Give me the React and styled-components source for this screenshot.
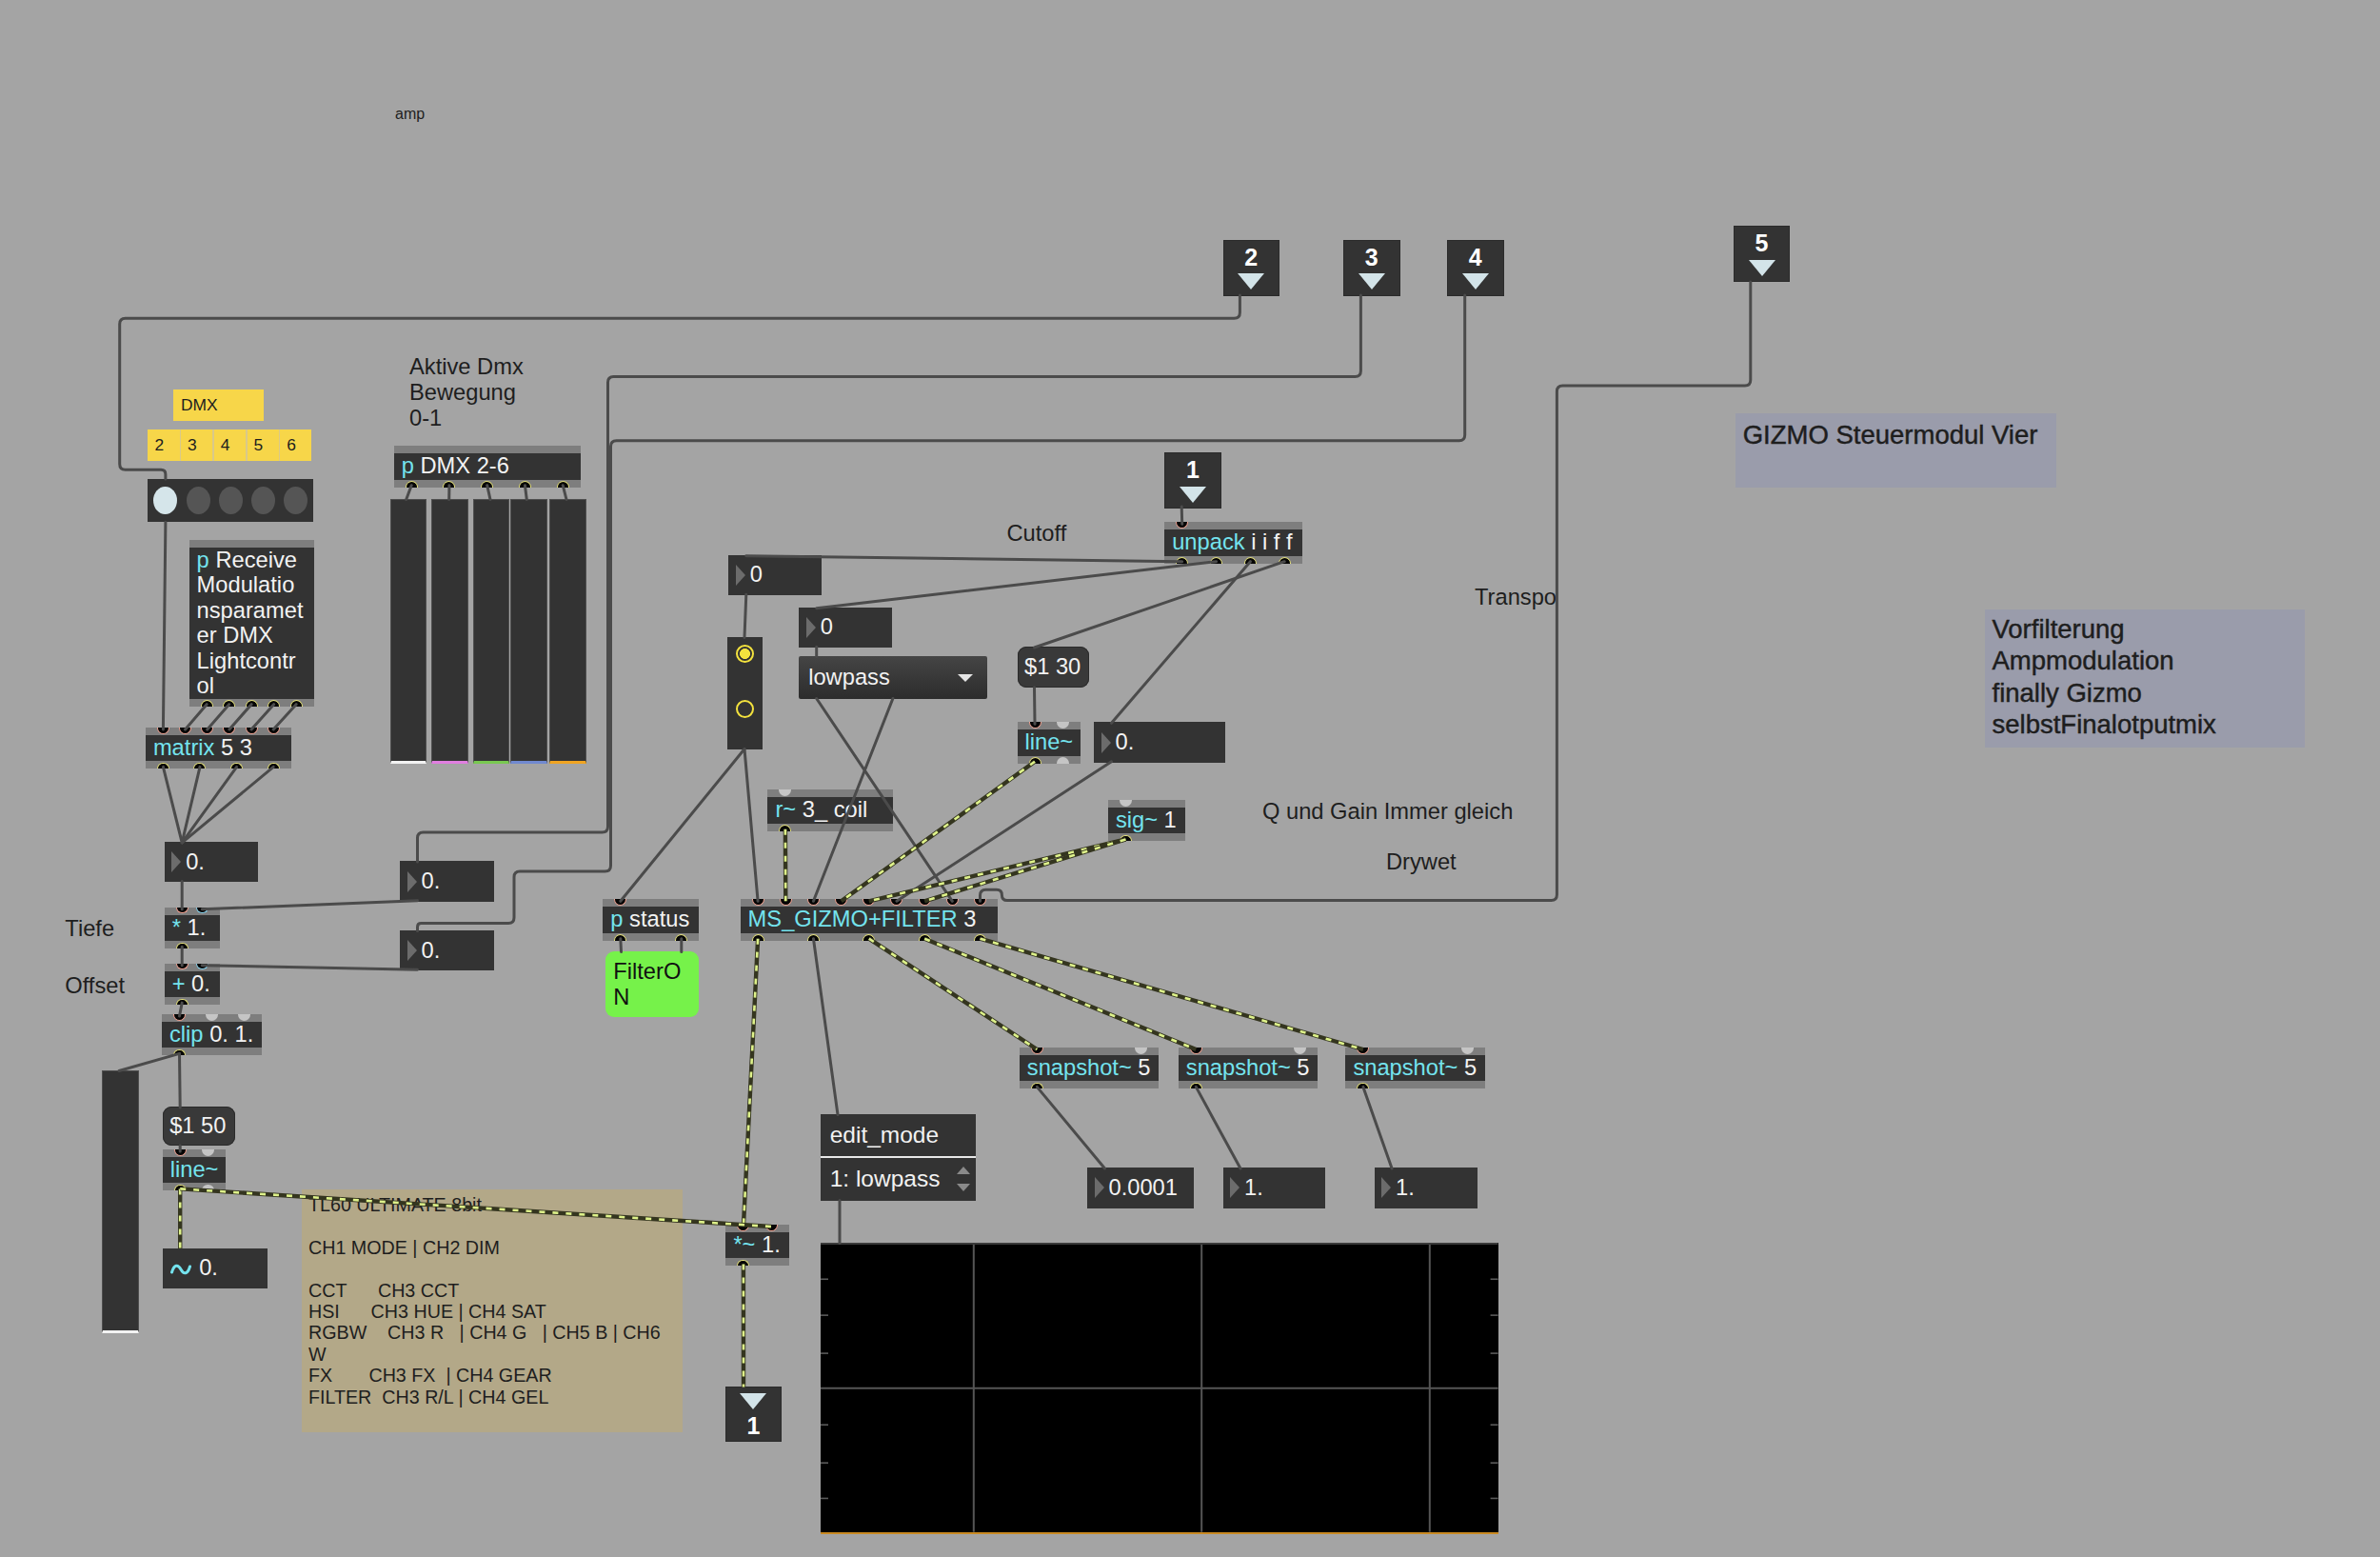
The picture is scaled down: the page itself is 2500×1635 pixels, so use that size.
import React from 'react';
import styled, { createGlobalStyle } from 'styled-components';

const FONT = '"Liberation Sans", Arial, Helvetica, sans-serif';
const BG = '#a4a4a4';
const CYAN = '#74e3ee';
const TEXT = '#f2f2f2';
const DARK = '#333333';
const STRIP = '#7e7e7e';
const RING = { hot: '#f2a392', cold: '#8ad4ef', on: '#e4e07c' };

const Global = createGlobalStyle`
  html, body { margin: 0; padding: 0; background: ${BG}; overflow: hidden; }
  * { box-sizing: border-box; }
`;

const Canvas = styled.div`
  position: relative;
  width: 2500px;
  height: 1635px;
  background: ${BG};
  font-family: ${FONT};
  overflow: hidden;
`;

const at = (p) => `left:${p.$x}px; top:${p.$y}px; width:${p.$w}px;`;

/* ---------- object boxes ---------- */
const ObjBox = styled.div`
  position: absolute;
  ${at}
  display: flex;
  flex-direction: column;
`;
const Strip = styled.div`
  height: 8px;
  flex: none;
  background: ${STRIP};
  display: flex;
  justify-content: ${(p) => (p.$single ? 'flex-start' : 'space-between')};
  align-items: ${(p) => (p.$bottom ? 'flex-end' : 'flex-start')};
  padding: 0 12px;
`;
const Port = styled.span`
  flex: none;
  width: 13px;
  height: 6.5px;
  background: ${(p) => (p.$kind === 'off' ? '#c5c5c5' : '#050505')};
  border: ${(p) => (p.$kind === 'off' ? 'none' : `1.6px solid ${RING[p.$kind]}`)};
  ${(p) =>
    p.$bottom
      ? 'border-bottom: none; border-radius: 6.5px 6.5px 0 0;'
      : 'border-top: none; border-radius: 0 0 6.5px 6.5px;'}
`;
const Body = styled.div`
  background: ${DARK};
  color: ${TEXT};
  font-size: 23.7px;
  line-height: ${(p) => p.$lh || 27.4}px;
  padding: 0 8px;
  white-space: nowrap;
  overflow: hidden;
`;
const Cls = styled.span`
  color: ${CYAN};
`;

function Ports({ list, bottom }) {
  return (
    <Strip $bottom={bottom} $single={list.length <= 1}>
      {list.map((k, i) => (
        <Port key={i} $kind={k} $bottom={bottom} />
      ))}
    </Strip>
  );
}

function Obj({ o }) {
  return (
    <ObjBox $x={o.x} $y={o.y} $w={o.w}>
      <Ports list={o.ins} />
      {o.lines ? (
        <Body $lh={26.5}>
          {o.lines.map((l, i) => (
            <div key={i}>
              {i === 0 ? (
                <>
                  <Cls>{o.cls}</Cls> {l}
                </>
              ) : (
                l
              )}
            </div>
          ))}
        </Body>
      ) : (
        <Body>
          <Cls>{o.cls}</Cls>
          {o.args ? ' ' + o.args : ''}
        </Body>
      )}
      <Ports list={o.outs} bottom />
    </ObjBox>
  );
}

/* ---------- number / message ---------- */
const NumBox = styled.div`
  position: absolute;
  ${at}
  height: ${(p) => p.$h || 42.5}px;
  background: ${DARK};
  color: ${TEXT};
  display: flex;
  align-items: center;
  font-size: 23.7px;
  padding-left: 7.5px;
  white-space: nowrap;
`;
const NumArrow = styled.span`
  flex: none;
  width: 0;
  height: 0;
  border-top: 11px solid transparent;
  border-bottom: 11px solid transparent;
  border-left: 10px solid #6c6c6c;
  margin-right: 5px;
`;
const Wave = styled.svg`
  flex: none;
  width: 22px;
  height: 14px;
  margin: 3px 8px 0 1px;
`;
const MsgBox = styled.div`
  position: absolute;
  ${at}
  height: ${(p) => p.$h}px;
  background: #393939;
  border-radius: 9px;
  color: ${TEXT};
  font-size: 23.7px;
  display: flex;
  align-items: center;
  padding-left: 7.5px;
  box-shadow: inset 0 0 0 1px #2b2b2b;
  white-space: nowrap;
`;

/* ---------- inlet / outlet objects ---------- */
const IOBox = styled.div`
  position: absolute;
  ${at}
  height: ${(p) => p.$h}px;
  background: ${DARK};
  border: 1px solid #2b2b2b;
  display: flex;
  flex-direction: column;
  align-items: center;
  padding-top: ${(p) => p.$pt}px;
  gap: 8.5px;
`;
const IONum = styled.span`
  color: #ffffff;
  font-weight: bold;
  font-size: 25px;
  line-height: 18px;
  height: 18px;
`;
const IOTri = styled.span`
  width: 0;
  height: 0;
  border-left: 14.3px solid transparent;
  border-right: 14.3px solid transparent;
  border-top: 17px solid #d3e4e9;
`;

/* ---------- comments ---------- */
const Note = styled.div`
  position: absolute;
  left: ${(p) => p.$x}px;
  top: ${(p) => p.$y}px;
  color: #1e1e1e;
  font-size: ${(p) => p.$fs || 23.7}px;
  line-height: ${(p) => p.$lh || 27}px;
  white-space: pre;
`;
const NoteBox = styled.div`
  position: absolute;
  ${at}
  height: ${(p) => p.$h}px;
  background: ${(p) => p.$bg};
  color: #1e1e1e;
  font-size: ${(p) => p.$fs}px;
  line-height: ${(p) => p.$lh}px;
  padding: ${(p) => p.$pt}px 0 0 ${(p) => p.$pl}px;
  white-space: pre;
  ${(p) => (p.$medium ? '-webkit-text-stroke: 0.45px #1e1e1e;' : '')}
`;
const Tabs = styled.div`
  position: absolute;
  ${at}
  height: 33px;
  display: flex;
  gap: 1.5px;
  background: #d9c98a;
`;
const Tab = styled.div`
  flex: 1;
  background: #f7d649;
  color: #1e1e1e;
  font-size: 17.4px;
  line-height: 33px;
  padding-left: 7px;
`;

/* ---------- ui widgets ---------- */
const Fader = styled.div`
  position: absolute;
  ${at}
  height: ${(p) => p.$h}px;
  background: ${DARK};
  border: 1px solid #4f4f4f;
  border-bottom: 3px solid ${(p) => p.$c};
`;
const LedRow = styled.div`
  position: absolute;
  ${at}
  height: 45.6px;
  background: ${DARK};
  display: flex;
  align-items: center;
  gap: 9.2px;
  padding-left: 6px;
`;
const Led = styled.span`
  flex: none;
  width: 25px;
  height: 29px;
  border-radius: 50%;
  background: ${(p) => (p.$on ? '#d5e5ea' : '#555555')};
`;
const RadioCol = styled.div`
  position: absolute;
  ${at}
  height: ${(p) => p.$h}px;
  background: ${DARK};
  display: flex;
  flex-direction: column;
  align-items: center;
  padding-top: 7.9px;
  gap: 39.3px;
`;
const RadioDot = styled.span`
  width: 19px;
  height: 19px;
  border-radius: 50%;
  border: 2.2px solid #f3e23e;
  background: ${(p) =>
    p.$on ? 'radial-gradient(circle, #f3e23e 0 5.2px, transparent 5.8px)' : 'transparent'};
`;
const Menu = styled.div`
  position: absolute;
  ${at}
  height: 45px;
  background: linear-gradient(#454545, #2c2c2c);
  color: ${TEXT};
  font-size: 23.7px;
  display: flex;
  align-items: center;
  justify-content: space-between;
  padding: 0 15px 0 10px;
  border-radius: 2px;
`;
const MenuArrow = styled.span`
  width: 0;
  height: 0;
  border-left: 8px solid transparent;
  border-right: 8px solid transparent;
  border-top: 8.5px solid #e6e6e6;
`;
const Attr = styled.div`
  position: absolute;
  ${at}
  background: ${DARK};
  color: ${TEXT};
  font-size: 24.5px;
  display: flex;
  flex-direction: column;
`;
const AttrRow = styled.div`
  height: ${(p) => p.$h}px;
  display: flex;
  align-items: center;
  justify-content: space-between;
  padding: 0 6.5px 0 9.5px;
  ${(p) => (p.$top ? 'border-bottom: 2.2px solid #e8e8e8;' : '')}
`;
const Spin = styled.span`
  display: flex;
  flex-direction: column;
  gap: 10px;
`;
const SpinTri = styled.span`
  width: 0;
  height: 0;
  border-left: 7px solid transparent;
  border-right: 7px solid transparent;
  ${(p) => (p.$up ? 'border-bottom: 8.5px solid #8a8a8a;' : 'border-top: 8.5px solid #8a8a8a;')}
`;
const Toggle = styled.div`
  position: absolute;
  ${at}
  height: ${(p) => p.$h}px;
  background: #76f24a;
  border-radius: 9px;
  color: #111111;
  font-size: 23.7px;
  line-height: 26.7px;
  padding: 8px 0 0 8.3px;
`;
const Scope = styled.div`
  position: absolute;
  ${at}
  height: ${(p) => p.$h}px;
  background: #000000;
  border-bottom: 2.5px solid #c98a22;
`;
const ScopeGrid = styled.svg`
  display: block;
  width: 100%;
  height: 100%;
`;

/* ---------- cords ---------- */
const Wires = styled.svg`
  position: absolute;
  left: 0;
  top: 0;
  width: 2500px;
  height: 1635px;
  pointer-events: none;
`;
const Wire = styled.path`
  fill: none;
  stroke: #4b4b4b;
  stroke-width: 3px;
  stroke-linecap: round;
  stroke-linejoin: round;
`;
const SigBase = styled.path`
  fill: none;
  stroke: #34351f;
  stroke-width: 4.4px;
`;
const SigDash = styled.path`
  fill: none;
  stroke: #def28a;
  stroke-width: 2.6px;
  stroke-dasharray: 6 8;
`;

function cord(pts, r = 6) {
  let d = `M${pts[0][0]} ${pts[0][1]}`;
  for (let i = 1; i < pts.length - 1; i++) {
    const [x0, y0] = pts[i - 1];
    const [x1, y1] = pts[i];
    const [x2, y2] = pts[i + 1];
    const l1 = Math.hypot(x1 - x0, y1 - y0) || 1;
    const l2 = Math.hypot(x2 - x1, y2 - y1) || 1;
    const rr = Math.min(r, l1 / 2, l2 / 2);
    d += ` L${x1 - ((x1 - x0) / l1) * rr} ${y1 - ((y1 - y0) / l1) * rr} Q${x1} ${y1} ${
      x1 + ((x2 - x1) / l2) * rr
    } ${y1 + ((y2 - y1) / l2) * rr}`;
  }
  const [xl, yl] = pts[pts.length - 1];
  return d + ` L${xl} ${yl}`;
}

/* ---------- data ---------- */
const H = 43.4;
const rep = (n, k) => Array(n).fill(k);
const OB = {
  matrix: { x: 152.9, y: 764, w: 152.8, cls: 'matrix', args: '5 3', ins: rep(6, 'hot'), outs: rep(4, 'on') },
  recv: {
    x: 198.6, y: 566.7, w: 131, h: 175, cls: 'p',
    lines: ['Receive', 'Modulatio', 'nsparamet', 'er DMX', 'Lightcontr', 'ol'],
    ins: [], outs: rep(5, 'on'),
  },
  dmx: { x: 413.7, y: 468.3, w: 196, cls: 'p', args: 'DMX 2-6', ins: [], outs: rep(5, 'on') },
  unpack: { x: 1223.2, y: 548.3, w: 144.5, cls: 'unpack', args: 'i i f f', ins: ['hot'], outs: rep(4, 'on') },
  lineR: { x: 1068.5, y: 758.3, w: 66.2, cls: 'line~', args: '', ins: ['hot', 'off'], outs: ['on', 'off'] },
  coil: { x: 806.4, y: 829.3, w: 132.1, cls: 'r~', args: '3_ coil', ins: ['off'], outs: ['on'] },
  sig: { x: 1163.9, y: 840, w: 81, cls: 'sig~', args: '1', ins: ['off'], outs: ['on'] },
  ms: { x: 777.6, y: 944.3, w: 270.4, cls: 'MS_GIZMO+FILTER', args: '3', ins: rep(9, 'hot'), outs: rep(5, 'on') },
  status: { x: 633.3, y: 944.3, w: 101, cls: 'p', args: 'status', ins: ['hot'], outs: ['on', 'on'] },
  snap1: { x: 1070.8, y: 1100, w: 146.2, cls: 'snapshot~', args: '5', ins: ['hot', 'off'], outs: ['on'] },
  snap2: { x: 1237.8, y: 1100, w: 146.2, cls: 'snapshot~', args: '5', ins: ['hot', 'off'], outs: ['on'] },
  snap3: { x: 1413.4, y: 1100, w: 146.6, cls: 'snapshot~', args: '5', ins: ['hot', 'off'], outs: ['on'] },
  mul: { x: 172.7, y: 952.8, w: 58, cls: '*', args: '1.', ins: ['hot', 'cold'], outs: ['on'] },
  add: { x: 172.7, y: 1011.7, w: 58, cls: '+', args: '0.', ins: ['hot', 'cold'], outs: ['on'] },
  clip: { x: 170, y: 1065, w: 105, cls: 'clip', args: '0. 1.', ins: ['hot', 'off', 'off'], outs: ['on'] },
  lineL: { x: 170.7, y: 1207, w: 66.3, cls: 'line~', args: '', ins: ['hot', 'off'], outs: ['on', 'off'] },
  mulsig: { x: 762.4, y: 1286, w: 66.2, cls: '*~', args: '1.', ins: ['hot', 'hot'], outs: ['on'] },
};
const portX = (o, i, n) => o.x + 18.5 + (n > 1 ? (i * (o.w - 37)) / (n - 1) : 0);
const inP = (o, i) => [portX(o, i, o.ins.length), o.y + 2];
const outP = (o, i) => [portX(o, i, o.outs.length), o.y + (o.h || H) - 2];

const NUMS = {
  tiefe: { x: 172.7, y: 883.9, w: 98.3, v: '0.' },
  r1: { x: 420, y: 904.3, w: 98.7, v: '0.' },
  r2: { x: 420, y: 976.8, w: 98.7, v: '0.' },
  a: { x: 765.3, y: 582.7, w: 97.6, v: '0' },
  b: { x: 839.2, y: 637.7, w: 97.9, v: '0' },
  c: { x: 1149, y: 758.3, w: 137.9, v: '0.' },
  s1: { x: 1142, y: 1226, w: 111.9, v: '0.0001' },
  s2: { x: 1284.5, y: 1226, w: 107.5, v: '1.' },
  s3: { x: 1443.6, y: 1226, w: 108, v: '1.' },
};
const nIn = (n) => [n.x + 18.5, n.y + 1];
const nOut = (n) => [n.x + 18.5, n.y + 41.5];

const FADERS = [
  { x: 410, w: 38.3, c: '#f2f2f2' },
  { x: 453.3, w: 38.7, c: '#e07ee0' },
  { x: 496.7, w: 38.6, c: '#78c850' },
  { x: 535.7, w: 39, c: '#7089d0' },
  { x: 577, w: 39.3, c: '#f0a422' },
];
const faderTops = [426.7, 471.7, 515, 553.3, 595];

const INLETS = [
  { n: '2', x: 1284.5, y: 251.7 },
  { n: '3', x: 1411, y: 251.7 },
  { n: '4', x: 1520, y: 251.7 },
  { n: '5', x: 1820.8, y: 237.3 },
  { n: '1', x: 1223.2, y: 475 },
];

const { matrix, recv, dmx, unpack, lineR, coil, sig, ms, status, snap1, snap2, snap3, mul, add, clip, lineL, mulsig } = OB;

const SOLID = [
  [[1302.4, 310], [1302.4, 334.3], [125.7, 334.3], [125.7, 493.3], [173.9, 493.3], [173.9, 503]],
  [[1429.4, 310], [1429.4, 395.5], [638.5, 395.5], [638.5, 874], [438.5, 874], [438.5, 905]],
  [[1538.7, 310], [1538.7, 462.7], [641.5, 462.7], [641.5, 915], [540, 915], [540, 969.6], [438.5, 969.6], [438.5, 977.5]],
  [[1838.8, 296], [1838.8, 405], [1635.4, 405], [1635.4, 945.5], [1052.4, 945.5], [1052.4, 934.3], [inP(ms, 8)[0], 934.3], inP(ms, 8)],
  [[1241.2, 532], inP(unpack, 0)],
  [[173.9, 548.3], inP(matrix, 0)],
  ...[0, 1, 2, 3, 4].map((i) => [outP(recv, i), inP(matrix, i + 1)]),
  ...[0, 1, 2, 3].map((i) => [outP(matrix, i), nIn(NUMS.tiefe)]),
  [nOut(NUMS.tiefe), inP(mul, 0)],
  [nOut(NUMS.r1), inP(mul, 1)],
  [nOut(NUMS.r2), inP(add, 1)],
  [outP(mul, 0), inP(add, 0)],
  [outP(add, 0), inP(clip, 0)],
  [outP(clip, 0), [125, 1124.5]],
  [outP(clip, 0), [189.2, 1163]],
  [[189.2, 1203], inP(lineL, 0)],
  ...[0, 1, 2, 3, 4].map((i) => [outP(dmx, i), [faderTops[i], 524.5]]),
  [outP(unpack, 0), nIn(NUMS.a)],
  [outP(unpack, 1), nIn(NUMS.b)],
  [outP(unpack, 2), nIn(NUMS.c)],
  [outP(unpack, 3), [1086.5, 680]],
  [nOut(NUMS.a), [782, 669.5]],
  [nOut(NUMS.b), [857.7, 689.5]],
  [[857.7, 733.5], inP(ms, 7)],
  [[937.9, 733.5], inP(ms, 2)],
  [[1086.5, 722], inP(lineR, 0)],
  [nOut(NUMS.c), inP(ms, 5)],
  [[782, 786.5], inP(status, 0)],
  [[782, 786.5], inP(ms, 0)],
  [outP(status, 0), [652.5, 999.5]],
  [outP(status, 1), [715.8, 999.5]],
  [outP(ms, 1), [880, 1170.5]],
  [[882, 1260.5], [882, 1305.5]],
  [outP(snap1, 0), nIn(NUMS.s1)],
  [outP(snap2, 0), nIn(NUMS.s2)],
  [outP(snap3, 0), nIn(NUMS.s3)],
];

const SIGNAL = [
  [outP(coil, 0), inP(ms, 1)],
  [outP(lineR, 0), inP(ms, 3)],
  [outP(sig, 0), inP(ms, 4)],
  [outP(sig, 0), inP(ms, 6)],
  [outP(ms, 0), inP(mulsig, 0)],
  [outP(ms, 2), inP(snap1, 0)],
  [outP(ms, 3), inP(snap2, 0)],
  [outP(ms, 4), inP(snap3, 0)],
  [outP(lineL, 0), [189.2, 1311]],
  [outP(lineL, 0), inP(mulsig, 1)],
  [outP(mulsig, 0), [781, 1456.5]],
];

const TL60 = `TL60 ULTIMATE 8bit

CH1 MODE | CH2 DIM

CCT      CH3 CCT
HSI      CH3 HUE | CH4 SAT
RGBW    CH3 R   | CH4 G   | CH5 B | CH6
W
FX       CH3 FX  | CH4 GEAR
FILTER  CH3 R/L | CH4 GEL`;

export default function App() {
  return (
    <>
      <Global />
      <Canvas>
        {/* comments */}
        <Note $x={415} $y={111} $fs={16} $lh={18}>amp</Note>
        <Note $x={430} $y={371.7}>{'Aktive Dmx\nBewegung\n0-1'}</Note>
        <Note $x={1057.5} $y={547.4}>Cutoff</Note>
        <Note $x={1549} $y={613.5}>Transpo</Note>
        <Note $x={1326} $y={838.7}>Q und Gain Immer gleich</Note>
        <Note $x={1456} $y={892}>Drywet</Note>
        <Note $x={68.3} $y={961.5}>Tiefe</Note>
        <Note $x={68.3} $y={1021.5}>Offset</Note>

        <NoteBox $x={182} $y={409.3} $w={95} $h={33} $bg="#f7d649" $fs={17.4} $lh={33} $pt={0} $pl={8}>
          DMX
        </NoteBox>
        <Tabs $x={155.4} $y={450.7} $w={172.1}>
          {['2', '3', '4', '5', '6'].map((t) => (
            <Tab key={t}>{t}</Tab>
          ))}
        </Tabs>
        <NoteBox $x={1822.7} $y={433.6} $w={337.3} $h={78.4} $bg="#9a9cab" $fs={27.5} $lh={33.5} $pt={6} $pl={8} $medium>
          GIZMO Steuermodul Vier
        </NoteBox>
        <NoteBox $x={2084.5} $y={639.6} $w={336} $h={145.7} $bg="#9a9cab" $fs={27.5} $lh={33.5} $pt={4.4} $pl={8} $medium>
          {'Vorfilterung\nAmpmodulation\nfinally Gizmo\nselbstFinalotputmix'}
        </NoteBox>
        <NoteBox $x={316.8} $y={1249.3} $w={400} $h={254.7} $bg="#b3a888" $fs={19.7} $lh={22.4} $pt={4.7} $pl={7.2}>
          {TL60}
        </NoteBox>

        {/* inlets / outlets */}
        {INLETS.map((p) => (
          <IOBox key={p.n + p.x} $x={p.x} $y={p.y} $w={59.5} $h={59} $pt={8}>
            <IONum>{p.n}</IONum>
            <IOTri />
          </IOBox>
        ))}
        <IOBox $x={762.4} $y={1456} $w={58.2} $h={58} $pt={5.7}>
          <IOTri />
          <IONum>1</IONum>
        </IOBox>

        {/* widgets */}
        <LedRow $x={155.4} $y={502.7} $w={173.2}>
          <Led $on />
          <Led />
          <Led />
          <Led />
          <Led />
        </LedRow>
        {FADERS.map((f) => (
          <Fader key={f.x} $x={f.x} $y={524} $w={f.w} $h={277.7} $c={f.c} />
        ))}
        <Fader $x={106.7} $y={1124} $w={39.3} $h={276} $c="#f2f2f2" />
        <RadioCol $x={763.5} $y={669.3} $w={37} $h={117.4}>
          <RadioDot $on />
          <RadioDot />
        </RadioCol>
        <Menu $x={839.2} $y={689} $w={197.5}>
          <span>lowpass</span>
          <MenuArrow />
        </Menu>
        <Toggle $x={636} $y={999} $w={98.3} $h={68.7}>
          FilterO
          <br />N
        </Toggle>
        <Attr $x={862.2} $y={1170.3} $w={163.3}>
          <AttrRow $h={45.7} $top>
            <span>edit_mode</span>
          </AttrRow>
          <AttrRow $h={44.6}>
            <span>1: lowpass</span>
            <Spin>
              <SpinTri $up />
              <SpinTri />
            </Spin>
          </AttrRow>
        </Attr>
        <Scope $x={862.2} $y={1305.2} $w={711.6} $h={305.8}>
          <ScopeGrid viewBox="0 0 711.6 303.3" preserveAspectRatio="none">
            {[160.8, 400.2, 639.8].map((x) => (
              <line key={x} x1={x} y1={0} x2={x} y2={303.3} stroke="#555" strokeWidth="2" />
            ))}
            <line x1={0} y1={152.5} x2={711.6} y2={152.5} stroke="#555" strokeWidth="2" />
            {[38.2, 76, 115.9, 190.9, 230.8, 268].map((y) => (
              <g key={y}>
                <line x1={0} y1={y} x2={8} y2={y} stroke="#5a5a5a" strokeWidth="1.6" />
                <line x1={703.6} y1={y} x2={711.6} y2={y} stroke="#5a5a5a" strokeWidth="1.6" />
              </g>
            ))}
            <line x1={0} y1={1} x2={711.6} y2={1} stroke="#3a3a3a" strokeWidth="2" />
          </ScopeGrid>
        </Scope>

        {/* objects */}
        {Object.entries(OB).map(([k, o]) => (
          <Obj key={k} o={o} />
        ))}

        {/* number boxes */}
        {Object.entries(NUMS).map(([k, n]) => (
          <NumBox key={k} $x={n.x} $y={n.y} $w={n.w}>
            <NumArrow />
            {n.v}
          </NumBox>
        ))}
        <NumBox $x={170.7} $y={1310.5} $w={110} $h={42.2}>
          <Wave viewBox="0 0 22 14">
            <path d="M1.5 10 C4 1.5 8 1.5 11 7 S18 12.5 20.5 4" fill="none" stroke={CYAN} strokeWidth="3" strokeLinecap="round" />
          </Wave>
          0.
        </NumBox>
        <MsgBox $x={1068.5} $y={679.3} $w={75.5} $h={43}>$1 30</MsgBox>
        <MsgBox $x={170.7} $y={1162.4} $w={76} $h={41}>$1 50</MsgBox>

        {/* patch cords */}
        <Wires viewBox="0 0 2500 1635">
          {SOLID.map((pts, i) => (
            <Wire key={'s' + i} d={cord(pts)} />
          ))}
          {SIGNAL.map((pts, i) => (
            <g key={'g' + i}>
              <SigBase d={cord(pts)} />
              <SigDash d={cord(pts)} />
            </g>
          ))}
        </Wires>
      </Canvas>
    </>
  );
}
